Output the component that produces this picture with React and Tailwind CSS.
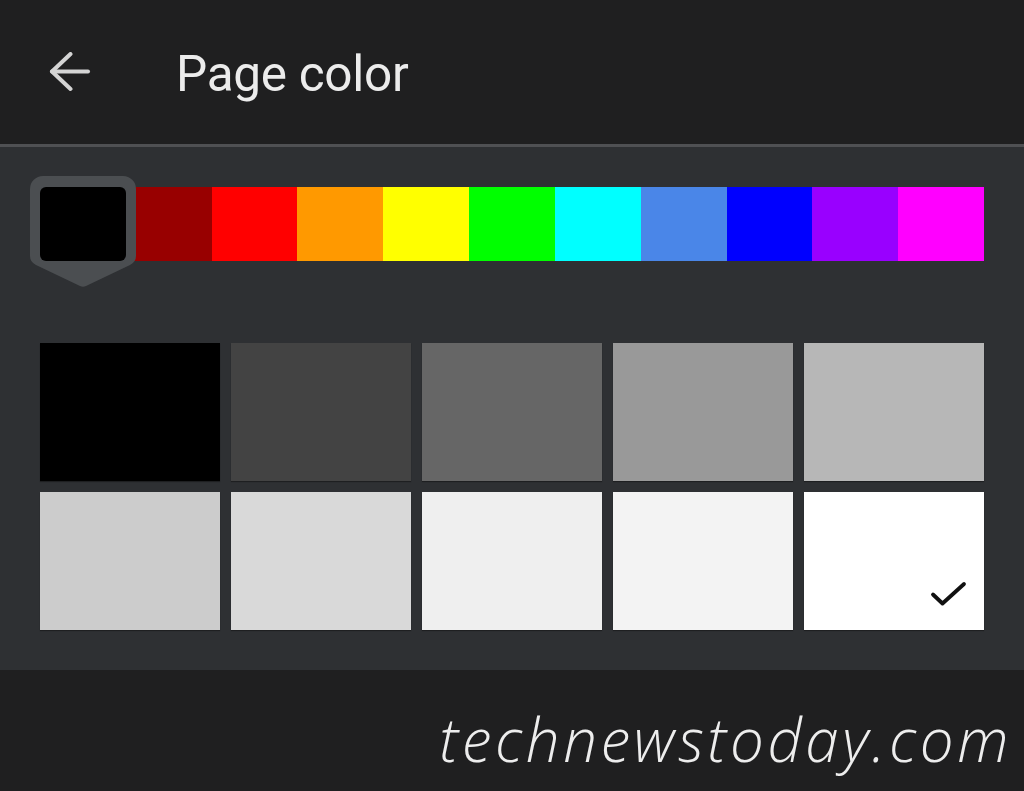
const HUES = [
  "#000000",
  "#980000",
  "#ff0000",
  "#ff9900",
  "#ffff00",
  "#00ff00",
  "#00ffff",
  "#4a86e8",
  "#0000ff",
  "#9900ff",
  "#ff00ff",
];

const GRAYS = [
  "#000000",
  "#434343",
  "#666666",
  "#999999",
  "#b7b7b7",
  "#cccccc",
  "#d9d9d9",
  "#efefef",
  "#f3f3f3",
  "#ffffff",
];

function BackArrow() {
  return (
    <svg width="44" height="42" viewBox="0 0 44 42" fill="none" stroke="#d4d4d4" strokeWidth="4" strokeLinecap="round" strokeLinejoin="round">
      <path d="M4 19.5H40" />
      <path d="M22.5 2 4 19.5 22.5 37" />
    </svg>
  );
}

function SelectedMarker() {
  // grey tab that wraps the picked hue and points down
  return (
    <svg className="absolute -left-[10px] -top-[11px]" width="106" height="112" viewBox="0 0 106 112">
      <path
        d="M13 0H93a13 13 0 0 1 13 13V80Q106 86 100 89L56 110Q53 111.5 50 110L6 89Q0 86 0 80V13A13 13 0 0 1 13 0Z"
        fill="#4b4e51"
      />
    </svg>
  );
}

function App() {
  const selectedGray = GRAYS.length - 1;

  return (
    <div className="w-[1024px] h-[791px] flex flex-col bg-[#1f1f20] font-['Roboto',sans-serif] overflow-hidden">
      <header className="h-[144px] flex items-center pl-[48px] shrink-0">
        <div className="mt-[2px]">
          <BackArrow />
        </div>
        <h1 className="ml-[84px] mt-[6px] text-[49.5px] leading-none text-[#ececec] tracking-[-0.3px]">Page color</h1>
      </header>
      <div className="h-[3px] bg-[#4f5053] shrink-0" />

      <section className="h-[523px] bg-[#2e3033] px-[40px] pt-[40px] shrink-0">
        <div className="grid grid-cols-11 h-[74px]">
          {HUES.map((hue, i) =>
            i === 0 ? (
              <div key={hue} className="relative">
                <SelectedMarker />
                <div className="absolute inset-0 rounded-[6px]" style={{ backgroundColor: hue }} />
              </div>
            ) : (
              <div key={hue} style={{ backgroundColor: hue }} />
            )
          )}
        </div>

        <div className="grid grid-cols-5 gap-x-[11px] gap-y-[11px] mt-[82px]">
          {GRAYS.map((gray, i) => (
            <div
              key={gray + i}
              className="relative h-[138px] shadow-[0_1px_1px_rgba(0,0,0,0.35)]"
              style={{ backgroundColor: gray }}
            >
              {i === selectedGray && (
                <svg className="absolute right-[16px] bottom-[20px]" width="38" height="30" viewBox="0 0 38 30" fill="none" stroke="#111" strokeWidth="3.8" strokeLinecap="round" strokeLinejoin="round">
                  <path d="M3 14.5 12.5 23.5 34 4" />
                </svg>
              )}
            </div>
          ))}
        </div>
      </section>

      <footer className="flex-1 flex items-center justify-end pr-[12px] pt-[16px]">
        <span className="font-['Open_Sans',sans-serif] italic font-light text-[60px] leading-none text-[#ededed] tracking-[3.6px]">
          technewstoday.com
        </span>
      </footer>
    </div>
  );
}

export default App;
